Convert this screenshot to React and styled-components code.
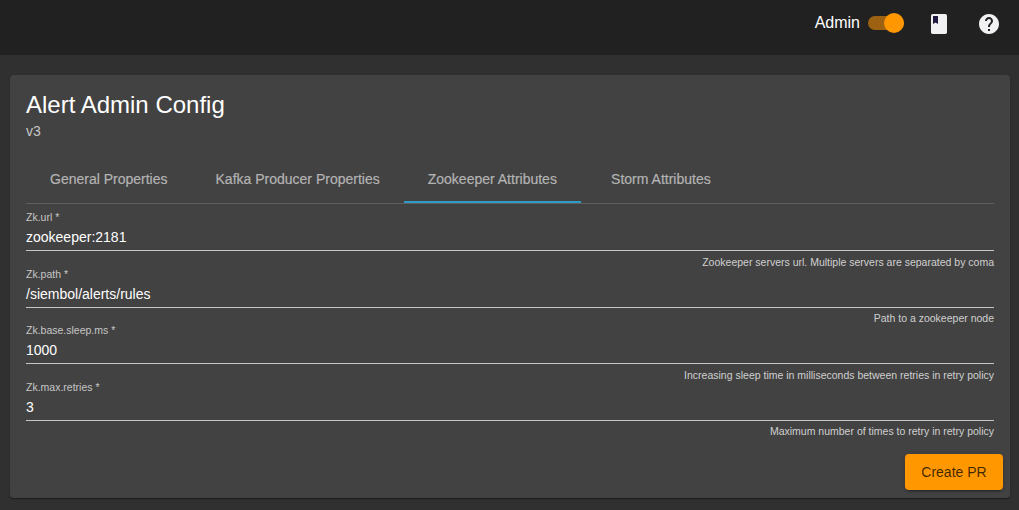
import React from "react";
import styled, { createGlobalStyle } from "styled-components";

const GlobalStyle = createGlobalStyle`
  * { box-sizing: border-box; }
  body {
    margin: 0;
    background: #303030;
    color: #fff;
    font-family: "Liberation Sans", Arial, sans-serif;
    font-size: 14px;
  }
`;

const Page = styled.div`
  height: 510px;
  overflow: hidden;
`;

const Toolbar = styled.header`
  display: flex;
  justify-content: flex-end;
  align-items: flex-start;
  height: 55px;
  padding: 12px 18px 0 0;
  background: #212121;
`;

const ToggleLabel = styled.span`
  font-size: 16px;
  line-height: 22px;
  margin-right: 8px;
`;

const Track = styled.span`
  display: flex;
  align-items: center;
  justify-content: flex-end;
  width: 36px;
  height: 14px;
  margin: 4px 23px 0 0;
  border-radius: 8px;
  background: #9c6212;
`;

const Thumb = styled.span`
  flex: none;
  width: 20px;
  height: 20px;
  border-radius: 50%;
  background: #ff9800;
`;

const Icon = styled.svg`
  display: block;
  width: 24px;
  height: 24px;
  margin-left: ${(p) => p.$gap || 0}px;
  fill: #f1f1f3;
`;

const Card = styled.main`
  display: flex;
  flex-direction: column;
  height: 423px;
  margin: 20px 9px 0 10px;
  padding: 16px;
  border-radius: 4px;
  background: #424242;
  box-shadow: 0 2px 1px -1px rgba(0, 0, 0, 0.2), 0 1px 1px rgba(0, 0, 0, 0.14),
    0 1px 3px rgba(0, 0, 0, 0.12);
`;

const Title = styled.h1`
  margin: 0;
  font-size: 24px;
  font-weight: 400;
  line-height: 28px;
`;

const Version = styled.div`
  margin-top: 4px;
  line-height: 16px;
  color: #c6c6c6;
`;

const Tabs = styled.nav`
  display: flex;
  height: 49px;
  margin-top: 16px;
  border-bottom: 1px solid #5f5f5f;
`;

const Tab = styled.div`
  display: flex;
  align-items: center;
  justify-content: center;
  height: 48px;
  min-width: 160px;
  padding: 0 24px;
  white-space: nowrap;
  color: #b3b3b3;
  -webkit-text-stroke: 0.2px #b3b3b3;
  box-shadow: ${(p) => (p.$active ? "inset 0 -2px #2d9cc6" : "none")};
`;

const Fields = styled.div`
  padding-top: 7px;
`;

const Field = styled.div`
  display: flex;
  flex-direction: column;
  height: 56.5px;
`;

const Label = styled.label`
  font-size: 10.5px;
  line-height: 12px;
  color: #c6c6c6;
`;

const Value = styled.div`
  flex: none;
  height: 28.4px;
  padding-top: 6px;
  line-height: 16px;
  border-bottom: 1px solid #c6c6c6;
`;

const Hint = styled.div`
  margin-top: 4.3px;
  text-align: right;
  font-size: 10.5px;
  line-height: 12px;
  color: #d0d0d0;
`;

const SubmitButton = styled.button`
  align-self: flex-end;
  width: 98px;
  height: 36px;
  margin: 17px -9px 0 0;
  padding: 0;
  border: 0;
  border-radius: 4px;
  background: #ff9800;
  color: rgba(0, 0, 0, 0.75);
  font: 14px/36px "Liberation Sans", Arial, sans-serif;
  box-shadow: 0 3px 1px -2px rgba(0, 0, 0, 0.2), 0 2px 2px rgba(0, 0, 0, 0.14),
    0 1px 5px rgba(0, 0, 0, 0.12);
`;

const tabs = [
  "General Properties",
  "Kafka Producer Properties",
  "Zookeeper Attributes",
  "Storm Attributes",
];

const fields = [
  ["Zk.url *", "zookeeper:2181", "Zookeeper servers url. Multiple servers are separated by coma"],
  ["Zk.path *", "/siembol/alerts/rules", "Path to a zookeeper node"],
  ["Zk.base.sleep.ms *", "1000", "Increasing sleep time in milliseconds between retries in retry policy"],
  ["Zk.max.retries *", "3", "Maximum number of times to retry in retry policy"],
];

export default function App() {
  return (
    <Page>
      <GlobalStyle />
      <Toolbar>
        <ToggleLabel>Admin</ToggleLabel>
        <Track>
          <Thumb />
        </Track>
        <Icon viewBox="0 0 24 24">
          <rect x="4" y="2" width="16" height="20" rx="1.8" />
          <path d="M6 4h5v8l-2.5-1.5L6 12z" fill="#20183f" />
        </Icon>
        <Icon viewBox="0 0 24 24" $gap={26}>
          <path d="M12 2C6.48 2 2 6.48 2 12s4.48 10 10 10 10-4.48 10-10S17.52 2 12 2zm1 17h-2v-2h2v2zm2.07-7.75l-.9.92C13.45 12.9 13 13.5 13 15h-2v-.5c0-1.1.45-2.1 1.17-2.83l1.24-1.26c.37-.36.59-.86.59-1.41 0-1.1-.9-2-2-2s-2 .9-2 2H8c0-2.21 1.79-4 4-4s4 1.79 4 4c0 .88-.36 1.68-.93 2.25z" />
        </Icon>
      </Toolbar>
      <Card>
        <Title>Alert Admin Config</Title>
        <Version>v3</Version>
        <Tabs>
          {tabs.map((name, i) => (
            <Tab key={name} $active={i === 2}>
              {name}
            </Tab>
          ))}
        </Tabs>
        <Fields>
          {fields.map(([label, value, hint]) => (
            <Field key={label}>
              <Label>{label}</Label>
              <Value>{value}</Value>
              <Hint>{hint}</Hint>
            </Field>
          ))}
        </Fields>
        <SubmitButton>Create PR</SubmitButton>
      </Card>
    </Page>
  );
}
